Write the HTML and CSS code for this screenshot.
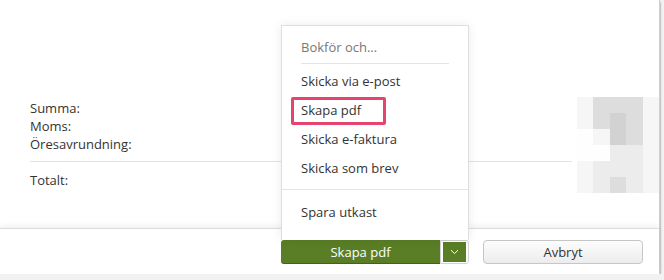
FILE: index.html
```html
<!DOCTYPE html>
<html lang="sv">

<head>
    <meta charset="UTF-8">
    <meta name="viewport" content="width=device-width, initial-scale=1.0">
    <title>Skapa faktura</title>
    <link rel="stylesheet" href="styles.css">
</head>

<body>
    <div class="dialog">
        <!-- Summary area -->
        <div class="dialog-body">
            <div class="totals">
                <div class="totals-rows">
                    <div>Summa:</div>
                    <div>Moms:</div>
                    <div>Öresavrundning:</div>
                </div>
                <div class="totals-sum">Totalt:</div>
            </div>
            <!-- Pixelated (censored) amounts -->
            <div class="blur-grid">
                <span class="g1"></span><span class="g3"></span><span class="g3"></span><span class="g3"></span><span class="g1"></span>
                <span class="g1"></span><span class="g3"></span><span class="g4"></span><span class="g3"></span><span class="g1"></span>
                <span class="g0"></span><span class="g1"></span><span class="g4"></span><span class="g3"></span><span class="g1"></span>
                <span class="g0"></span><span class="g0"></span><span class="g2"></span><span class="g2"></span><span class="g1"></span>
                <span class="g1"></span><span class="g2"></span><span class="g2"></span><span class="g2"></span><span class="g1"></span>
                <span class="g1"></span><span class="g2"></span><span class="g3"></span><span class="g2"></span><span class="g1"></span>
            </div>
        </div>

        <!-- Footer with buttons -->
        <div class="dialog-footer">
            <div class="split-button">
                <div class="dropdown-menu">
                    <div class="menu-head">Bokför och...</div>
                    <div class="menu-group">
                        <a href="#">Skicka via e-post</a>
                        <a href="#">Skapa pdf<span class="highlight"></span></a>
                        <a href="#">Skicka e-faktura</a>
                        <a href="#">Skicka som brev</a>
                    </div>
                    <div class="menu-group last">
                        <a href="#">Spara utkast</a>
                    </div>
                </div>
                <button class="btn-primary">Skapa pdf</button>
                <button class="btn-toggle">
                    <span class="toggle-inner">
                        <svg width="9" height="6" viewBox="0 0 9 6"><path d="M1 1.2 L4.5 4.6 L8 1.2" fill="none" stroke="#fff" stroke-width="1"/></svg>
                    </span>
                </button>
            </div>
            <button class="btn-default">Avbryt</button>
        </div>
    </div>
</body>

</html>
```

FILE: styles.css
```css
body {
    font-family: 'Open Sans', 'Liberation Sans', sans-serif;
    font-size: 13px;
    margin: 0;
    padding: 0;
    background-color: #f2f2f2;
    color: #333;
}

.dialog {
    width: 659px;
    height: 274px;
    background-color: #fff;
    border-right: 1px solid #cfcfcf;
    box-shadow: 0 2px 2px rgba(0, 0, 0, 0.55);
    display: flex;
    flex-direction: column;
}

/* Summary */
.dialog-body {
    height: 228px;
    display: flex;
}

.totals {
    flex: 1;
    margin-left: 30px;
    margin-right: 5px;
    padding-top: 99px;
    line-height: 18px;
}

.totals-rows {
    padding-bottom: 8px;
    border-bottom: 1px solid #e2e2e2;
}

.totals-sum {
    padding-top: 9px;
}

.blur-grid {
    margin-top: 97px;
    width: 82px;
    height: 96px;
    display: grid;
    grid-template-columns: repeat(5, 1fr);
    grid-template-rows: repeat(6, 1fr);
}

.g0 { background-color: #fefefe; }
.g1 { background-color: #f6f6f6; }
.g2 { background-color: #ececec; }
.g3 { background-color: #dddddd; }
.g4 { background-color: #d2d2d2; }

/* Footer */
.dialog-footer {
    flex: 1;
    border-top: 1px solid #dcdcdc;
    box-shadow: 0 -3px 5px rgba(0, 0, 0, 0.05);
    display: flex;
    justify-content: flex-end;
    align-items: flex-start;
    padding: 11px 16px 0 0;
}

.split-button {
    position: relative;
    display: flex;
    margin-right: 14px;
}

.btn-primary {
    width: 159px;
    height: 24px;
    font-family: inherit;
    font-size: 13px;
    color: #fff;
    background-color: #5a7e25;
    border: none;
    border-bottom: 1px solid #46621a;
    border-radius: 3px 0 0 3px;
    padding: 0;
}

.btn-toggle {
    width: 29px;
    height: 24px;
    padding: 1px 2px;
    background-color: #fff;
    border: 1px solid #d2d2d2;
    border-radius: 0 3px 3px 0;
    display: flex;
}

.toggle-inner {
    flex: 1;
    background-color: #5a7e25;
    display: flex;
    align-items: center;
    justify-content: center;
}

.btn-default {
    width: 160px;
    height: 24px;
    font-family: inherit;
    font-size: 13px;
    color: #333;
    background: linear-gradient(#fdfdfd, #ececec);
    border: 1px solid #c6c6c6;
    border-radius: 4px;
    padding: 0;
}

/* Dropdown menu (open) */
.dropdown-menu {
    position: absolute;
    left: 0;
    bottom: 100%;
    width: 186px;
    background-color: #fff;
    border: 1px solid #dedede;
    border-bottom: none;
    box-shadow: 0 0 10px rgba(0, 0, 0, 0.08);
    z-index: 10;
}

.menu-head {
    color: #777;
    margin: 0 19px;
    padding: 12px 0 7px;
    line-height: 18px;
    border-bottom: 1px solid #e4e4e4;
}

.menu-group {
    padding: 3px 0 6px;
    border-bottom: 1px solid #e4e4e4;
}

.menu-group.last {
    padding: 8px 0 13px;
    border-bottom: none;
}

.menu-group a {
    position: relative;
    display: block;
    padding: 5px 19px 6px;
    line-height: 18px;
    color: #333;
    text-decoration: none;
}

/* Red marker around the chosen option */
.highlight {
    position: absolute;
    left: 9px;
    top: 1px;
    width: 95px;
    height: 28px;
    box-sizing: border-box;
    border: 3px solid #e4446d;
    border-radius: 2px;
}
```
